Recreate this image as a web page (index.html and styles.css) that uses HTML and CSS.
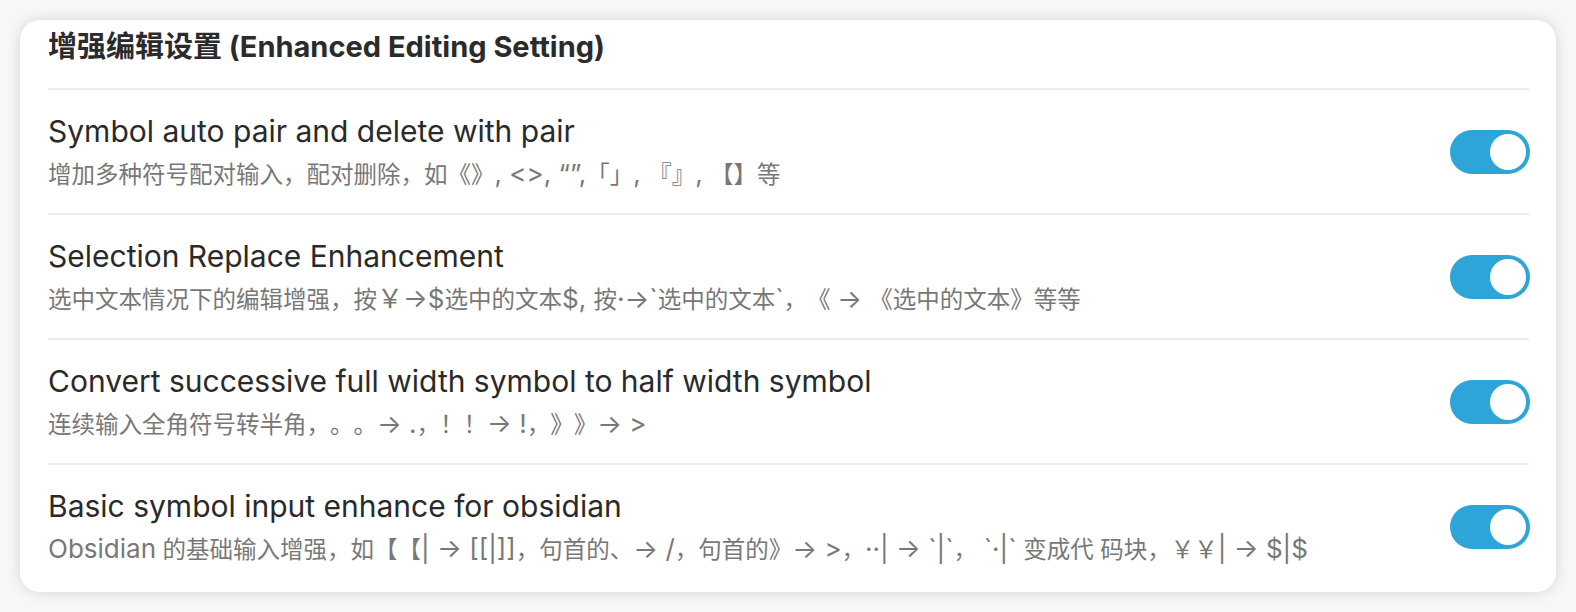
FILE: index.html
```html
<!DOCTYPE html>
<html lang="zh">
<head>
<meta charset="utf-8">
<link rel="stylesheet" href="styles.css">
</head>
<body>
<div class="card">
  <div class="heading">增强编辑设置 (Enhanced Editing Setting)</div>
  <div class="item">
    <div class="info">
      <div class="name">Symbol auto pair and delete with pair</div>
      <div class="desc">增加多种符号配对输入，配对删除，如《》<span class="en">, &lt;&gt;, “”,</span>「」<span class="en">, </span>『』<span class="en">, </span>【】等</div>
    </div>
    <div class="toggle"><span class="knob"></span></div>
  </div>
  <div class="item">
    <div class="info">
      <div class="name">Selection Replace Enhancement</div>
      <div class="desc">选中文本情况下的编辑增强，按<span class="en">￥→$</span>选中的文本<span class="en">$, </span>按<span class="en">·→`</span>选中的文本<span class="en">`</span>，《 <span class="en">→ </span>《选中的文本》等等</div>
    </div>
    <div class="toggle"><span class="knob"></span></div>
  </div>
  <div class="item">
    <div class="info">
      <div class="name">Convert successive full width symbol to half width symbol</div>
      <div class="desc">连续输入全角符号转半角，。。<span class="en">→ .</span>，！！<span class="en">→ !</span>，》》<span class="en">→ &gt;</span></div>
    </div>
    <div class="toggle"><span class="knob"></span></div>
  </div>
  <div class="item">
    <div class="info">
      <div class="name">Basic symbol input enhance for obsidian</div>
      <div class="desc"><span class="en">Obsidian</span> 的基础输入增强，如【【<span class="en">| → [[|]]</span>，句首的、<span class="en">→ /</span>，句首的》<span class="en">→ &gt;</span>，<span class="en">··| → `|`</span>， <span class="en">`·|`</span> 变成代 码块，￥￥<span class="en">| → $|$</span></div>
    </div>
    <div class="toggle"><span class="knob"></span></div>
  </div>
</div>
</body>
</html>
```

FILE: styles.css
```css
html, body {
  margin: 0;
  padding: 0;
}
body {
  background: #f7f7f7;
  font-family: Inter, "Noto Sans CJK SC", sans-serif;
  width: 1576px;
  height: 612px;
  overflow: hidden;
  text-spacing-trim: space-all;
}
.card {
  box-sizing: border-box;
  margin: 20px 0 0 20px;
  width: 1536px;
  height: 572px;
  background: #ffffff;
  border-radius: 20px;
  box-shadow: 0 0 14px rgba(0, 0, 0, 0.14);
  padding: 0 27px 0 28px;
  overflow: hidden;
}
.heading {
  height: 68px;
  box-sizing: border-box;
  padding-top: 9px;
  font-size: 29px;
  line-height: 36px;
  font-weight: 700;
  color: #2b2b2b;
}
.item {
  box-sizing: border-box;
  height: 125px;
  border-top: 2px solid #ececec;
  display: flex;
  align-items: center;
  justify-content: space-between;
}
.info {
  display: flex;
  flex-direction: column;
  gap: 10px;
}
.name {
  font-size: 30px;
  line-height: 36px;
  color: #2a2a2a;
}
.desc {
  font-size: 23.5px;
  line-height: 30px;
  color: #787878;
  text-spacing-trim: space-all;
}
.en {
  font-size: 26px;
}
.toggle {
  box-sizing: border-box;
  width: 80px;
  height: 44px;
  border-radius: 22px;
  background: #2ea5d8;
  padding: 4px;
  display: flex;
  justify-content: flex-end;
  margin-right: -1px;
}
.knob {
  width: 36px;
  height: 36px;
  border-radius: 50%;
  background: #ffffff;
}
```
